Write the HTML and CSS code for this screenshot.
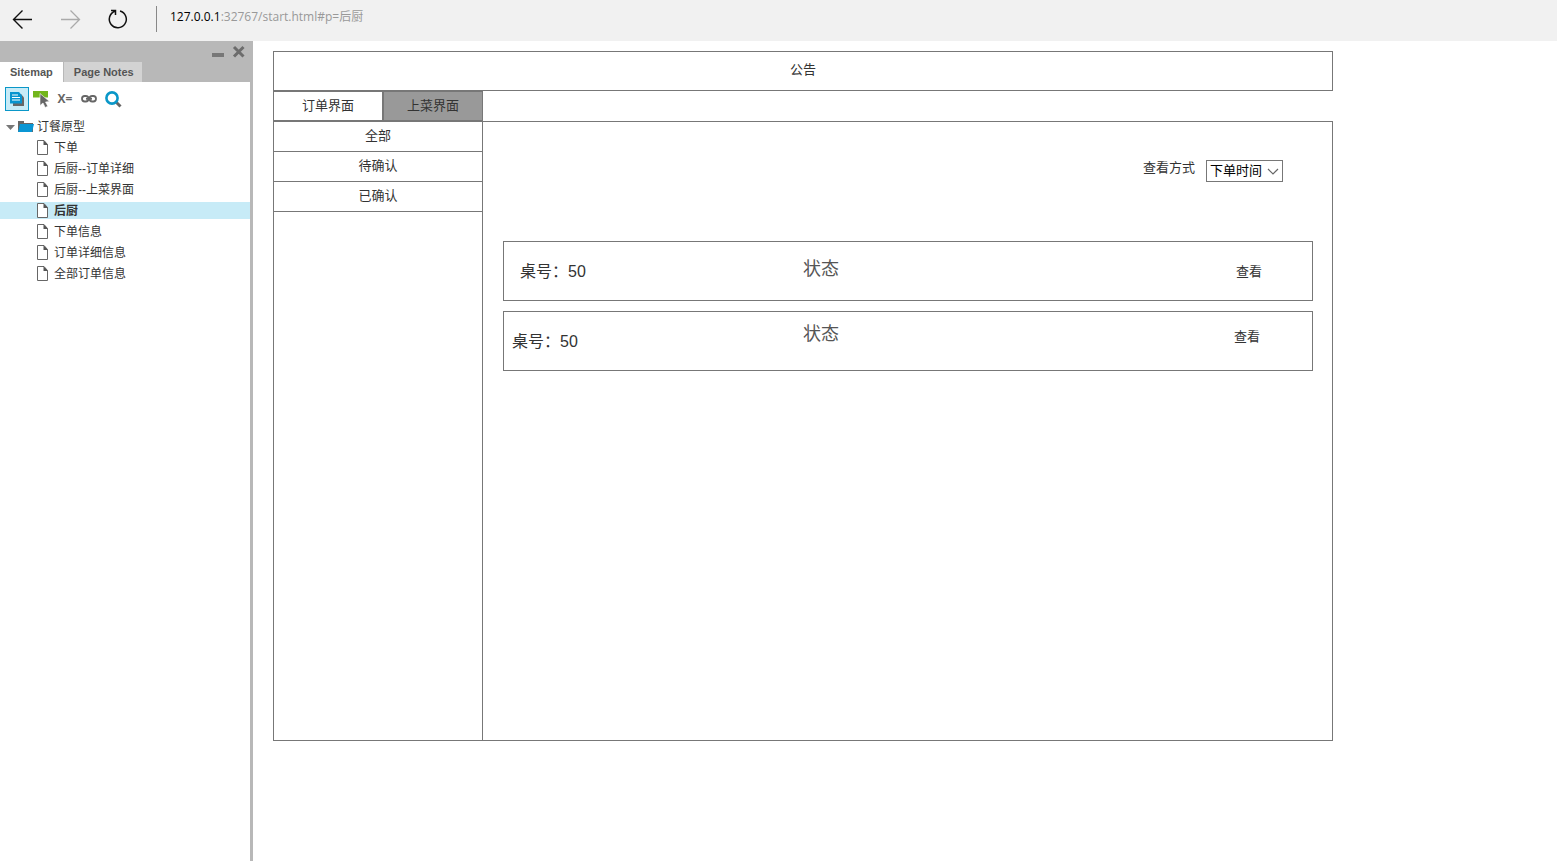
FILE: index.html
```html
<!DOCTYPE html>
<html lang="zh-CN">
<head>
<meta charset="utf-8">
<title>后厨</title>
<link rel="stylesheet" href="styles.css">
</head>
<body>
<header class="browser">
  <button class="nav" aria-label="Back"><svg width="24" height="24" viewBox="0 0 24 24"><path d="M22 13.500H4M12.500 4.500L3.500 13.500l9 9" fill="none" stroke="#111" stroke-width="1.400"/></svg></button>
  <button class="nav" aria-label="Forward"><svg width="24" height="24" viewBox="0 0 24 24"><path d="M3 13.500h18M12.500 4.500l9 9-9 9" fill="none" stroke="#aaa" stroke-width="1.300"/></svg></button>
  <button class="nav" aria-label="Refresh"><svg width="24" height="24" viewBox="0 0 24 24"><path d="M14 5A8.500 8.500 0 1 1 9 5.200M5 4.500h4.500v4.500" fill="none" stroke="#111" stroke-width="1.500"/></svg></button>
  <p class="address"><span class="host">127.0.0.1</span>:32767/start.html#p=后厨</p>
</header>
<div class="workspace">
  <aside class="sidebar">
    <div class="panel-head">
      <div class="panel-controls">
        <button class="control" aria-label="Minimize"><svg width="12" height="14" viewBox="0 0 12 14"><path d="M0 8h12v4H0z" fill="#777"/></svg></button>
        <button class="control" aria-label="Close"><svg width="13" height="14" viewBox="0 0 13 14"><path d="M2 2l9.500 9.500M11.500 2L2 11.500" stroke="#6c6c6c" stroke-width="3"/></svg></button>
      </div>
      <div class="panel-tabs">
        <button class="panel-tab panel-tab-active">Sitemap</button>
        <button class="panel-tab">Page Notes</button>
      </div>
    </div>
    <div class="toolbar">
      <button class="tool tool-active" aria-label="Pages"><svg width="22" height="22" viewBox="0 0 22 22"><path d="M7 6h8l3 3.500V18H7z" fill="#666"/><path d="M4 4h9l3 3.500V15.500H4z" fill="#0794cf"/><path d="M6 7h6M6 9.500h8M6 12h8" stroke="#fff" stroke-width="1"/></svg></button>
      <button class="tool" aria-label="Highlight interactive elements"><svg width="24" height="24" viewBox="0 0 24 24"><path d="M4 4h15v6.500H4z" fill="#72b51c"/><path d="M11 6.500v12l3-2.500 2.200 4.500 2.600-1.300-2.300-4.200 4-.500z" fill="#666" stroke="#fff" stroke-width=".6"/></svg></button>
      <button class="tool tool-text" aria-label="Variables">X=</button>
      <button class="tool" aria-label="Link"><svg width="24" height="24" viewBox="0 0 24 24"><g fill="none" stroke="#666" stroke-width="1.800"><rect x="5" y="9" width="6.500" height="5.500" rx="2.700"/><rect x="12.500" y="9" width="6.500" height="5.500" rx="2.700"/><path d="M9 11.800h6"/></g></svg></button>
      <button class="tool" aria-label="Search"><svg width="24" height="24" viewBox="0 0 24 24"><path d="M15 15l4.500 4.500" stroke="#666" stroke-width="3"/><circle cx="11" cy="11" r="5.600" fill="none" stroke="#0a97c8" stroke-width="2.600"/></svg></button>
    </div>
    <svg class="defs" width="0" height="0" aria-hidden="true"><symbol id="page" viewBox="0 0 12 15"><path d="M.5 .5H7L10.500 4.500v10H.5z" fill="#fff" stroke="#666"/><path d="M6.500 0L11 5H6.500z" fill="#555"/></symbol></svg>
    <nav class="tree">
      <a class="folder" href="#"><svg width="9" height="6" viewBox="0 0 9 6"><path d="M0 1h9L4.500 6z" fill="#777"/></svg><svg width="16" height="12" viewBox="0 0 16 12"><path d="M0 0h6v2h9v9H0z" fill="#666"/><path d="M0 11L2 3h14l-2 8z" fill="#0a96d4"/></svg><span class="label">订餐原型</span></a>
      <a class="leaf" href="#"><svg width="12" height="15"><use href="#page"/></svg><span class="label">下单</span></a>
      <a class="leaf" href="#"><svg width="12" height="15"><use href="#page"/></svg><span class="label">后厨--订单详细</span></a>
      <a class="leaf" href="#"><svg width="12" height="15"><use href="#page"/></svg><span class="label">后厨--上菜界面</span></a>
      <a class="leaf leaf-current" href="#"><svg width="12" height="15"><use href="#page"/></svg><span class="label">后厨</span></a>
      <a class="leaf" href="#"><svg width="12" height="15"><use href="#page"/></svg><span class="label">下单信息</span></a>
      <a class="leaf" href="#"><svg width="12" height="15"><use href="#page"/></svg><span class="label">订单详细信息</span></a>
      <a class="leaf" href="#"><svg width="12" height="15"><use href="#page"/></svg><span class="label">全部订单信息</span></a>
    </nav>
  </aside>
  <main class="stage">
    <div class="notice">公告</div>
    <div class="tabs">
      <button class="tab">订单界面</button>
      <button class="tab tab-dim">上菜界面</button>
    </div>
    <div class="board">
      <div class="filters">
        <button class="filter">全部</button>
        <button class="filter">待确认</button>
        <button class="filter">已确认</button>
      </div>
      <section class="orders">
        <div class="sort">
          <label for="sort">查看方式</label>
          <div class="select-box">
            <select id="sort"><option>下单时间</option></select>
            <svg class="chevron" width="12" height="8" viewBox="0 0 12 8"><path d="M1 1l5 5 5-5" fill="none" stroke="#666" stroke-width="1.200"/></svg>
          </div>
        </div>
        <article class="order">
          <span class="table-no">桌号：50</span>
          <span class="status">状态</span>
          <a class="view" href="#">查看</a>
        </article>
        <article class="order order-compact">
          <span class="table-no">桌号：50</span>
          <span class="status">状态</span>
          <a class="view" href="#">查看</a>
        </article>
      </section>
    </div>
  </main>
</div>
</body>
</html>
```
FILE: styles.css
```css
* { box-sizing: border-box; }
body {
  margin: 0;
  min-height: 100vh;
  display: flex;
  flex-direction: column;
  background: #fff;
  color: #333;
  font: 13px/20px "Liberation Sans", "Noto Sans CJK SC", sans-serif;
}
button {
  margin: 0;
  padding: 0;
  border: 0;
  background: none;
  color: inherit;
  font: inherit;
}
a { color: inherit; text-decoration: none; }
svg { display: block; flex: none; }

.browser {
  display: flex;
  align-items: flex-start;
  height: 41px;
  padding: 6px 10px;
  background: #f1f1f1;
}
.nav { width: 24px; margin-right: 24px; }
.address {
  margin: 0;
  height: 26px;
  padding-left: 13px;
  border-left: 1px solid #888;
  color: #999;
  font: 12px/22px "Open Sans", "Noto Sans CJK SC", sans-serif;
}
.nav + .address { margin-left: 2px; }
.host { color: #000; }

.workspace { display: flex; flex: 1; }
.sidebar {
  flex: none;
  width: 253px;
  border-right: 3px solid #b8b8b8;
}
.panel-head { background: #b8b8b8; }
.panel-controls {
  display: flex;
  justify-content: flex-end;
  gap: 8px;
  height: 21px;
  padding: 4px 5px 0;
}
.control { height: 14px; }
.panel-tabs { display: flex; gap: 1px; }
.panel-tab {
  height: 20px;
  padding: 0 8px 0 10px;
  background: #d3d3d3;
  color: #555;
  font-size: 11px;
  font-weight: bold;
  line-height: 18px;
}
.panel-tab-active { padding: 0 10px; background: #fff; }
.toolbar { display: flex; padding: 5px; }
.tool { width: 24px; height: 24px; }
.tool-active { border: 1px solid #0a97c8; background: #c7ebf7; }
.tool-text { color: #666; font: bold 12px/24px "Open Sans", sans-serif; }
.defs { position: absolute; }
.tree {
  display: flex;
  flex-direction: column;
  gap: 4px;
  padding-top: 2px;
  font-size: 12px;
  line-height: 17px;
}
.folder, .leaf { display: flex; align-items: center; height: 17px; }
.folder { gap: 3px; padding-left: 6px; }
.leaf { gap: 5px; padding-left: 37px; }
.leaf-current { background: #c7ebf7; font-weight: bold; }
.label { padding-top: 2px; }

.stage {
  flex: 1;
  max-width: 1080px;
  padding: 10px 0 20px 20px;
}
.notice {
  padding: 8px 9px 10px;
  border: 1px solid #777;
  text-align: center;
}
.tabs { display: flex; width: 210px; }
.tab {
  flex: 11;
  height: 30px;
  border: 1px solid #777;
}
.tab-dim { flex: 10; background: #999; }
.board {
  display: flex;
  min-height: 620px;
  border: 1px solid #777;
}
.filters { flex: none; width: 209px; border-right: 1px solid #777; }
.filter {
  display: block;
  width: 100%;
  height: 30px;
  padding-bottom: 2px;
  border-bottom: 1px solid #777;
}
.orders { flex: 1; padding: 38px 19px 20px 20px; }
.sort {
  display: flex;
  justify-content: flex-end;
  gap: 11px;
  padding-right: 30px;
  margin-bottom: 59px;
}
.sort label { line-height: 16px; }
.select-box { position: relative; }
.select-box select {
  appearance: none;
  display: block;
  width: 77px;
  height: 22px;
  padding: 0 3px;
  border: 1px solid #777;
  border-radius: 0;
  background: #fff;
  color: #000;
  font: inherit;
}
.chevron { position: absolute; right: 4px; top: 8px; pointer-events: none; }
.order {
  display: grid;
  grid-template-columns: 299px 1fr 76px;
  align-items: start;
  height: 60px;
  border: 1px solid #777;
}
.order + .order { margin-top: 10px; }
.table-no { padding: 20px 0 0 16px; font-size: 16px; }
.status { padding-top: 17px; font-size: 18px; color: #555; }
.view { padding-top: 20px; }
.order-compact { grid-template-columns: 299px 1fr 78px; }
.order-compact .table-no { padding-left: 8px; }
.order-compact .status { padding-top: 12px; }
.order-compact .view { padding-top: 15px; }
```
